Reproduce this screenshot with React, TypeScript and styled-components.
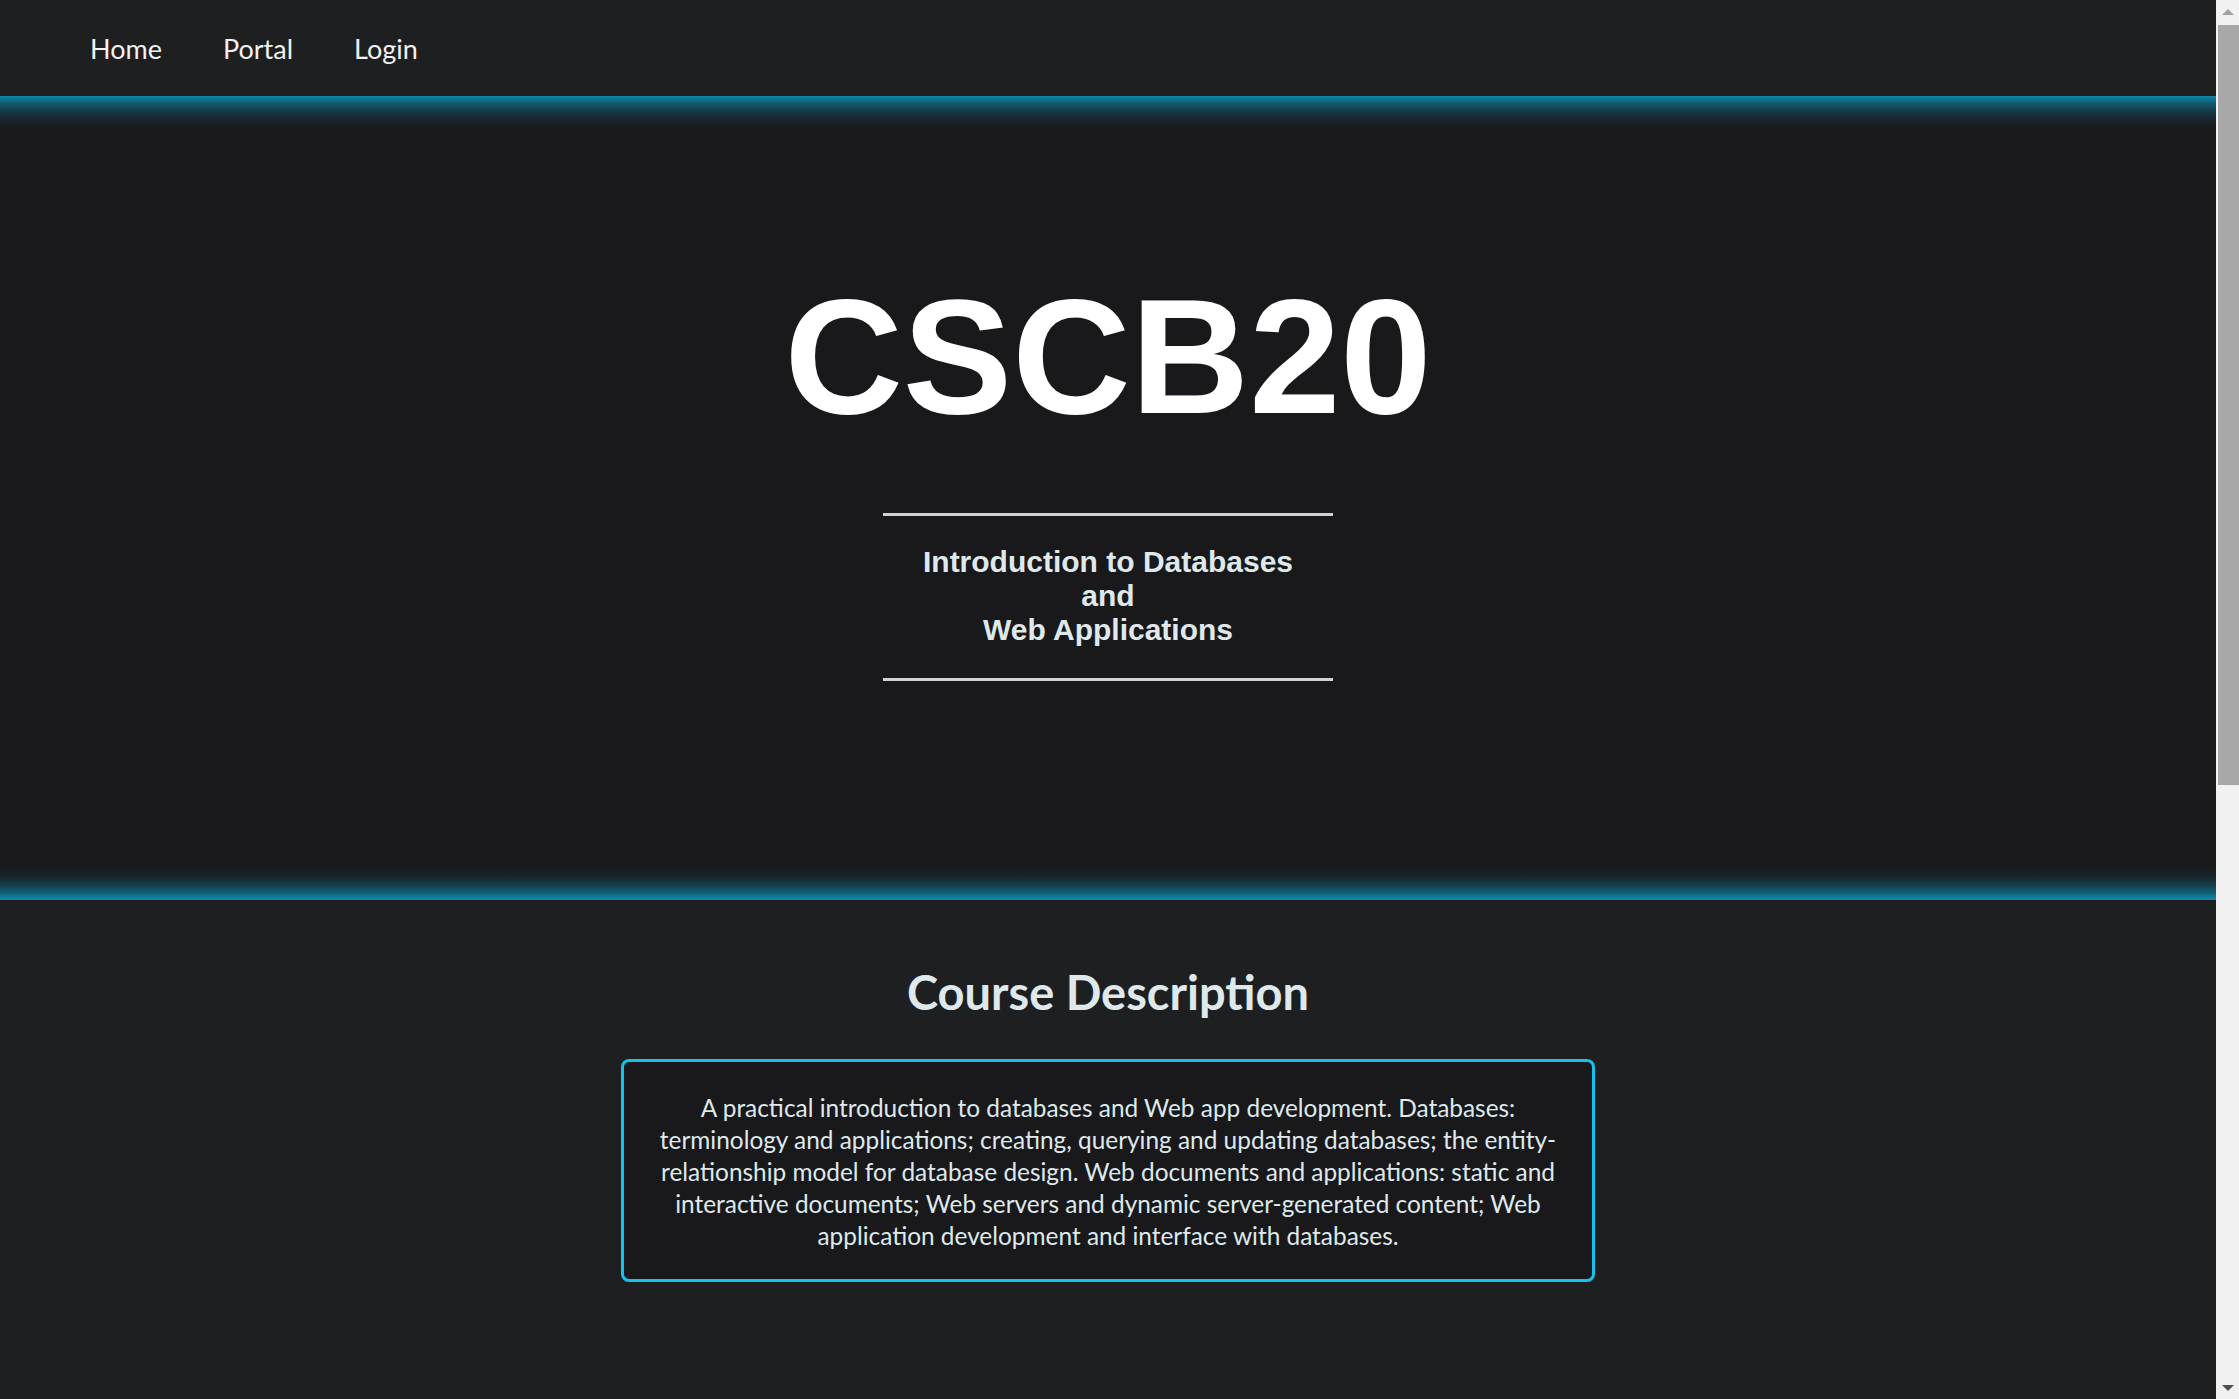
import React from "react";
import styled, { createGlobalStyle } from "styled-components";

const GlobalStyle = createGlobalStyle`
  html, body {
    margin: 0;
    padding: 0;
    background: #1e1f21;
  }
  body {
    font-family: "Lato", "Open Sans", sans-serif;
    padding-right: 23px;
  }
`;

const Page = styled.div`
  display: flex;
  flex-direction: column;
  min-height: 2480px;
  background: #1e1f21;
`;

const NavBar = styled.nav`
  display: flex;
  align-items: center;
  gap: 61px;
  height: 96px;
  padding-left: 90px;
  background: #1e1f21;
`;

const NavLink = styled.a`
  font-family: "Lato", sans-serif;
  font-size: 27px;
  color: #f2f2f2;
  text-decoration: none;
  cursor: pointer;
`;

const glow = (dir: string, c: string) =>
  `linear-gradient(${dir}, rgba(${c}, 1) 0, rgba(${c}, 0.6) 7px, rgba(${c}, 0.3) 15px, rgba(${c}, 0.1) 24px, rgba(${c}, 0) 34px)`;

const Hero = styled.header`
  display: flex;
  flex-direction: column;
  align-items: center;
  box-sizing: border-box;
  height: 804px;
  padding-top: 179px;
  background: ${glow("to bottom", "13, 136, 170")}, ${glow("to top", "11, 143, 180")}, #19191c;
`;

const Title = styled.h1`
  margin: 0 0 74px;
  font-family: "Liberation Sans", Arial, sans-serif;
  font-size: 164px;
  font-weight: 700;
  line-height: 164px;
  color: #ffffff;
`;

const Subtitle = styled.div`
  box-sizing: border-box;
  width: 450px;
  padding: 29px 0 31px;
  border-top: 3px solid #d2d2d2;
  border-bottom: 3px solid #d2d2d2;
  text-align: center;
  font-family: "Liberation Sans", Arial, sans-serif;
  font-size: 30px;
  font-weight: 700;
  line-height: 34px;
  color: #dfe9ec;
`;

const Section = styled.section`
  flex: 1;
  display: flex;
  flex-direction: column;
  align-items: center;
  padding-top: 64px;
`;

const SectionTitle = styled.h2`
  margin: 0 0 39px;
  font-family: "Lato", sans-serif;
  font-size: 47px;
  font-weight: 700;
  line-height: 1.2;
  color: #dfe9ec;
`;

const DescriptionBox = styled.div`
  box-sizing: border-box;
  width: 974px;
  padding: 30px 30px 27px;
  border: 3px solid #15c2ec;
  border-radius: 8px;
  background: #19191c;
  text-align: center;
  font-family: "Lato", sans-serif;
  font-size: 24.4px;
  line-height: 32px;
  color: #dfe9ec;
`;

/* window scrollbar, as in the screenshot */
const ScrollBar = styled.div`
  position: fixed;
  top: 0;
  right: 0;
  bottom: 0;
  width: 23px;
  display: flex;
  flex-direction: column;
  background: #f1f1f1;
`;

const ScrollArrow = styled.div<{ $down?: boolean }>`
  height: 25px;
  display: flex;
  align-items: center;
  justify-content: center;
  &::before {
    content: "";
    border-left: 6px solid transparent;
    border-right: 6px solid transparent;
    ${({ $down }) =>
      $down
        ? "border-top: 6px solid #505050; margin-top: 2px;"
        : "border-bottom: 6px solid #a3a3a3; margin-bottom: 2px;"}
  }
`;

const ScrollTrack = styled.div`
  flex: 1;
  padding-left: 2px;
`;

const ScrollThumb = styled.div`
  height: 760px;
  background: #a8a8a8;
`;

const App: React.FC = () => {
  return (
    <>
      <GlobalStyle />
      <Page>
        <NavBar>
          <NavLink>Home</NavLink>
          <NavLink>Portal</NavLink>
          <NavLink>Login</NavLink>
        </NavBar>
        <Hero>
          <Title>CSCB20</Title>
          <Subtitle>
            Introduction to Databases
            <br />
            and
            <br />
            Web Applications
          </Subtitle>
        </Hero>
        <Section>
          <SectionTitle>Course Description</SectionTitle>
          <DescriptionBox>
            A practical introduction to databases and Web app development.
            Databases: terminology and applications; creating, querying and
            updating databases; the entity-relationship model for database
            design. Web documents and applications: static and interactive
            documents; Web servers and dynamic server-generated content; Web
            application development and interface with databases.
          </DescriptionBox>
        </Section>
      </Page>
      <ScrollBar>
        <ScrollArrow />
        <ScrollTrack>
          <ScrollThumb />
        </ScrollTrack>
        <ScrollArrow $down />
      </ScrollBar>
    </>
  );
};

export default App;
